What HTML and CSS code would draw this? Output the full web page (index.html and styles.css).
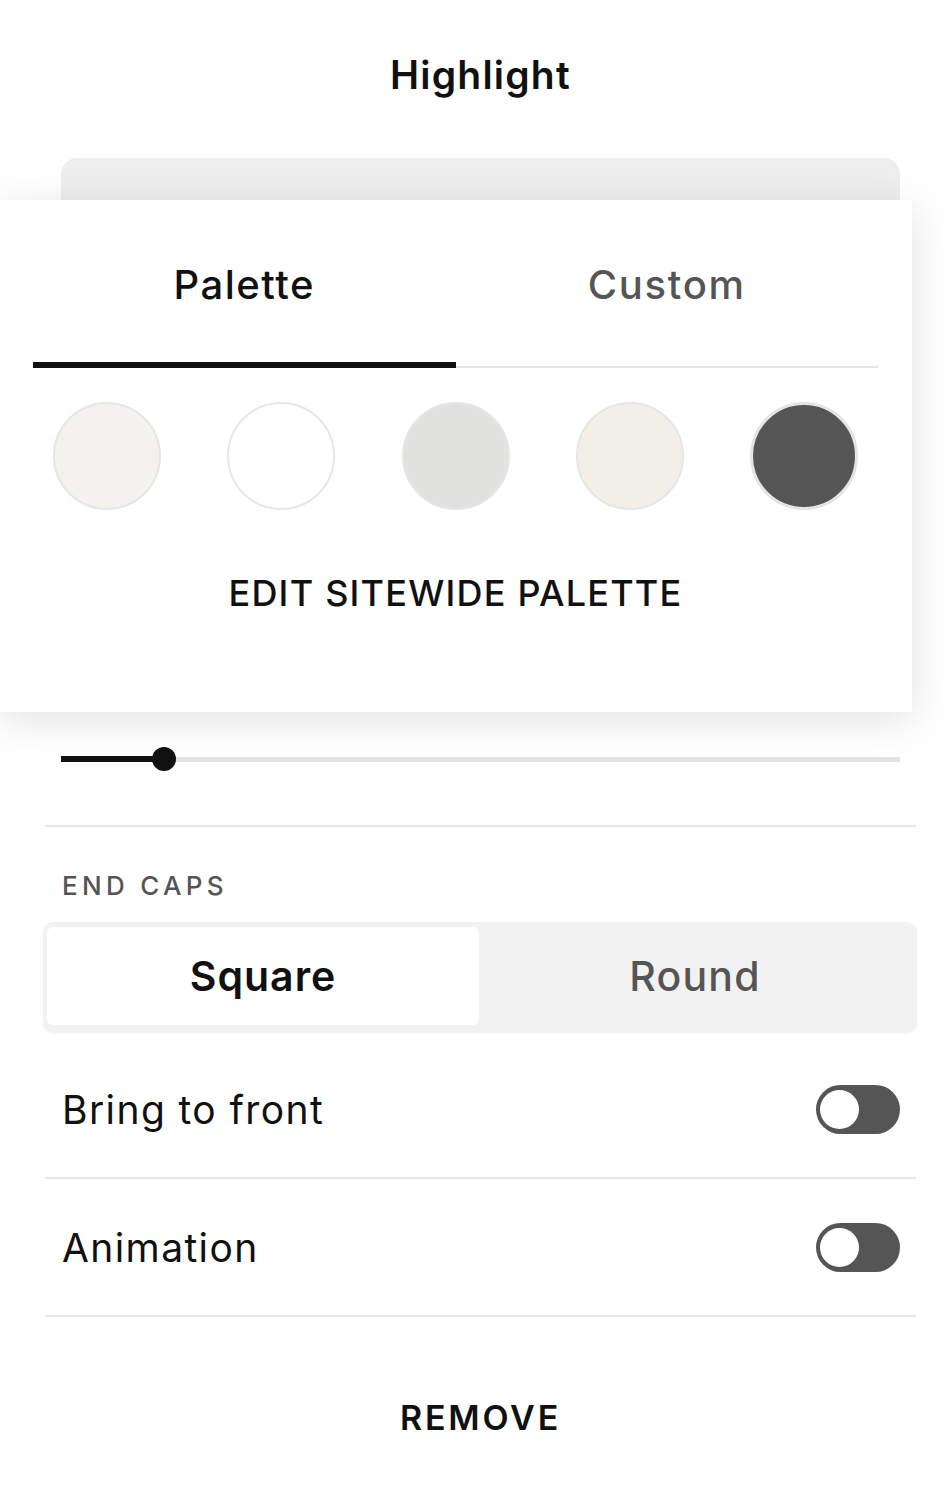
FILE: index.html
```html
<!DOCTYPE html>
<html lang="en">
<head>
<meta charset="utf-8">
<title>Highlight</title>
<link rel="stylesheet" href="styles.css">
</head>
<body>
<div class="panel">
  <div class="column">
    <h1 class="title">Highlight</h1>
    <div class="color-card"></div>
    <div class="slider">
      <div class="slider-fill" style="width:103px"></div>
      <div class="slider-knob"></div>
      <div class="slider-rest"></div>
    </div>
    <div class="divider"></div>
    <div class="field-label">END CAPS</div>
    <div class="segmented">
      <div class="seg seg-active">Square</div>
      <div class="seg">Round</div>
    </div>
    <div class="row row-first">
      <span class="row-label">Bring to front</span>
      <span class="toggle"><span class="knob"></span></span>
    </div>
    <div class="row">
      <span class="row-label">Animation</span>
      <span class="toggle"><span class="knob"></span></span>
    </div>
    <div class="remove">REMOVE</div>
  </div>

  <div class="popover">
    <div class="tabs">
      <div class="tab tab-active">Palette</div>
      <div class="tab">Custom</div>
    </div>
    <div class="swatches">
      <span class="swatch swatch-1"></span>
      <span class="swatch swatch-2"></span>
      <span class="swatch swatch-3"></span>
      <span class="swatch swatch-4"></span>
      <span class="swatch swatch-5"></span>
    </div>
    <div class="palette-link">EDIT SITEWIDE PALETTE</div>
  </div>
</div>
</body>
</html>
```

FILE: styles.css
```css
* { box-sizing: border-box; }

body {
  margin: 0;
  background: #ffffff;
  font-family: Inter, "Liberation Sans", sans-serif;
  color: #111111;
}

.panel {
  position: relative;
  width: 946px;
  height: 1500px;
  overflow: hidden;
  background: #ffffff;
}

.column {
  margin: 0 30px 0 45px;
}

.title {
  margin: 0;
  height: 158px;
  padding-bottom: 10px;
  display: flex;
  align-items: center;
  justify-content: center;
  font-size: 39px;
  font-weight: 600;
  letter-spacing: 1.2px;
  color: #111111;
}

.color-card {
  margin: 0 16px;
  height: 100px;
  background: #eeeeee;
  border-radius: 16px;
}

.slider {
  margin: 489px 16px 0;
  height: 24px;
  display: flex;
  align-items: center;
}

.slider-fill {
  height: 6px;
  background: #111111;
}

.slider-knob {
  position: relative;
  z-index: 1;
  width: 24px;
  height: 24px;
  border-radius: 50%;
  background: #111111;
  margin: 0 -12px;
  flex: none;
}

.slider-rest {
  flex: 1;
  height: 5px;
  background: #e3e3e3;
}

.divider {
  margin-top: 54px;
  height: 2px;
  background: #e8e8e8;
}

.field-label {
  margin: 44px 17px 0;
  font-size: 26px;
  line-height: 30px;
  letter-spacing: 4.3px;
  font-weight: 500;
  color: #555555;
}

.segmented {
  margin: 21px -1px 0 -2px;
  height: 110px;
  padding: 5px 6px 7px 4px;
  background: #f2f2f2;
  border-radius: 10px;
  box-shadow: 0 1px 2px rgba(0, 0, 0, 0.06);
  display: grid;
  grid-template-columns: 1fr 1fr;
}

.seg {
  display: flex;
  align-items: center;
  justify-content: center;
  font-size: 41px;
  font-weight: 500;
  letter-spacing: 1.2px;
  color: #555555;
}

.seg-active {
  background: #ffffff;
  color: #111111;
  border-radius: 6px;
  font-weight: 600;
  letter-spacing: 1px;
}

.row {
  height: 138px;
  border-bottom: 2px solid #e8e8e8;
  display: flex;
  align-items: center;
  justify-content: space-between;
  padding: 0 16px 0 17px;
}

.row-first {
  margin-top: 9px;
}

.row-label {
  font-size: 39px;
  font-weight: 400;
  letter-spacing: 1.4px;
  color: #111111;
}

.toggle {
  width: 84px;
  height: 49px;
  border-radius: 25px;
  background: #555555;
  display: flex;
  align-items: center;
  padding-left: 4px;
}

.knob {
  width: 39px;
  height: 39px;
  border-radius: 50%;
  background: #ffffff;
}

.remove {
  height: 200px;
  display: flex;
  align-items: center;
  justify-content: center;
  font-size: 34px;
  font-weight: 600;
  letter-spacing: 2.8px;
  color: #111111;
}

.popover {
  position: absolute;
  top: 200px;
  left: 0;
  width: 912px;
  height: 512px;
  padding: 0 34px 0 33px;
  background: #ffffff;
  box-shadow: 0 8px 40px rgba(0, 0, 0, 0.12);
}

.tabs {
  display: flex;
  height: 168px;
}

.tab {
  flex: 1;
  display: flex;
  align-items: center;
  justify-content: center;
  font-size: 40px;
  font-weight: 500;
  letter-spacing: 1.7px;
  color: #555555;
  box-shadow: inset 0 -2px 0 #e4e4e4;
}

.tab-active {
  color: #111111;
  letter-spacing: 1.5px;
  box-shadow: inset 0 -6px 0 #111111;
}

.swatches {
  margin-top: 34px;
  padding: 0 20px;
  display: flex;
  justify-content: space-between;
}

.swatch {
  width: 108px;
  height: 108px;
  border-radius: 50%;
  border: 2px solid #e6e6e6;
}

.swatch-1 { background: #f4f2ee; }
.swatch-2 { background: #ffffff; }
.swatch-3 { background: #e1e1df; }
.swatch-4 { background: #f1efe8; }
.swatch-5 { background: #555555; border: 3px solid #e4e4e4; }

.palette-link {
  margin-top: 63px;
  text-align: center;
  font-size: 36px;
  line-height: 40px;
  font-weight: 500;
  letter-spacing: 1.2px;
  color: #111111;
}
```
